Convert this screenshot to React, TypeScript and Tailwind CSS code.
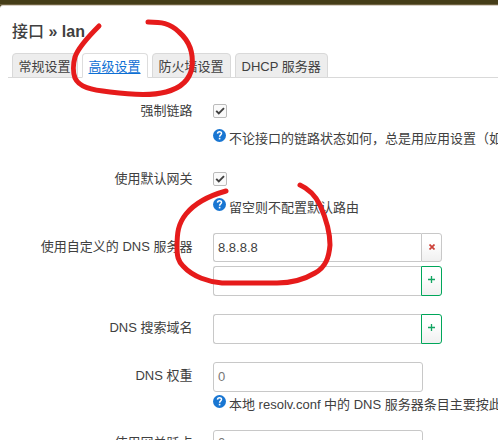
import type { ReactNode } from 'react';

function Tab({ children, active = false }: { children: ReactNode; active?: boolean }) {
  return (
    <div
      className={
        'h-[25px] whitespace-nowrap rounded-t-[4px] border pl-[5.5px] pr-[6.5px] text-[13px] leading-[25px] ' +
        (active
          ? 'border-[#ddd] border-b-white bg-white text-[#0d6fd4] underline underline-offset-[2px]'
          : 'border-[#d9d9d9] bg-[#ededed]')
      }
    >
      {children}
    </div>
  );
}

function Row({ label, height, labelPad, children }: { label: string; height: string; labelPad: string; children: ReactNode }) {
  return (
    <div className={'flex shrink-0 gap-5 ' + height}>
      <div className={'w-[193px] shrink-0 whitespace-nowrap pr-[0.5px] text-right ' + labelPad}>{label}</div>
      <div className="min-w-0 flex-1">{children}</div>
    </div>
  );
}

function Check() {
  return (
    <div className="mt-[2px] h-[14px] w-[14px] rounded-[2px] border border-[#bbb] bg-[#fafafa]">
      <svg viewBox="0 0 12 12" className="block h-3 w-3" fill="none" stroke="#404040" strokeWidth="1.9">
        <path d="M2.2 5.8 4.8 8.5 10 3.2" />
      </svg>
    </div>
  );
}

function Hint({ children, className }: { children: ReactNode; className: string }) {
  return (
    <div className={'flex gap-[3px] whitespace-nowrap ' + className}>
      <svg viewBox="0 0 13 13" className="h-[13px] w-[13px] shrink-0">
        <circle cx="6.5" cy="6.5" r="6.5" fill="#1976d2" />
        <path d="M4.5 4.6C4.6 2.1 8.6 2.2 8.5 4.5C8.4 5.9 6.6 5.9 6.6 7.7" fill="none" stroke="#fff" strokeWidth="1.5" />
        <rect x="5.8" y="8.8" width="1.6" height="1.6" fill="#fff" />
      </svg>
      <span className="pt-[1px]">{children}</span>
    </div>
  );
}

function Field({ value = '', action, height }: { value?: string; action: 'add' | 'remove'; height: string }) {
  return (
    <div className={'flex w-[229px] ' + height}>
      <div className="flex flex-1 items-center rounded-l-[3px] border border-r-0 border-[#c8c8c8] pl-[4px]">{value}</div>
      <div
        className={
          'flex w-[21px] items-center justify-center rounded-r-[3px] border bg-linear-to-b from-white from-30% to-[#f0f0f0] ' +
          (action === 'add' ? 'border-[#00a65a]' : 'border-[#c8c8c8]')
        }
      >
        {action === 'add' ? (
          <svg viewBox="0 0 7 7" className="mb-[3px] h-[7px] w-[7px]" stroke="#12a562" strokeWidth="1.3">
            <path d="M0 3.5H7M3.5 0V7" />
          </svg>
        ) : (
          <svg viewBox="0 0 6 6" className="mb-[1px] h-[6px] w-[6px]" stroke="#cc4038" strokeWidth="1.7">
            <path d="M.5 .5 5.5 5.5M5.5 .5 .5 5.5" />
          </svg>
        )}
      </div>
    </div>
  );
}

function NumberBox({ align }: { align: string }) {
  return (
    <div className={'flex h-[30px] w-[210px] rounded-[3px] border border-[#c8c8c8] pl-[4px] text-[#777] ' + align}>0</div>
  );
}

export default function App() {
  return (
    <div className="relative h-[440px] w-[498px] overflow-hidden bg-[#453d18] font-['Liberation_Sans','Noto_Sans_CJK_SC',sans-serif] text-[13px] leading-[18px] text-[#404040]">
      <div className="h-[4px] bg-[#453d18]" />
      <div className="h-[1px] bg-[#6c603e]" />
      <div className="h-[435px] rounded-tl-[3px] border-t border-[#d8d0c6] bg-white">
        <h1 className="h-[47px] pl-[12px] pt-[16px] text-[16px] font-bold leading-[20px]">
          <span className="font-medium">接口</span> » lan
        </h1>
        <div className="ml-[8px] flex h-[25px] gap-[4px] border-b border-[#d9d9d9] pl-[4px]">
          <Tab>常规设置</Tab>
          <Tab active>高级设置</Tab>
          <Tab>防火墙设置</Tab>
          <Tab>DHCP 服务器</Tab>
        </div>
        <div className="flex flex-col gap-[18px] pt-[24px]">
          <Row label="强制链路" height="h-[50px]" labelPad="pt-0">
            <Check />
            <Hint className="mt-[11px]">不论接口的链路状态如何，总是用应用设置（如</Hint>
          </Row>
          <Row label="使用默认网关" height="h-[45px]" labelPad="pt-0">
            <Check />
            <Hint className="mt-[12px]">留空则不配置默认路由</Hint>
          </Row>
          <Row label="使用自定义的 DNS 服务器" height="h-[63px]" labelPad="pt-[5px]">
            <div className="flex flex-col gap-[4px]">
              <Field value="8.8.8.8" action="remove" height="h-[29px]" />
              <Field action="add" height="h-[30px]" />
            </div>
          </Row>
          <Row label="DNS 搜索域名" height="h-[30px]" labelPad="pt-[5px]">
            <Field action="add" height="h-[30px]" />
          </Row>
          <Row label="DNS 权重" height="h-[50px]" labelPad="pt-[5px]">
            <NumberBox align="items-center" />
            <Hint className="mt-[3px]">本地 resolv.conf 中的 DNS 服务器条目主要按此</Hint>
          </Row>
          <Row label="使用网关跃点" height="h-[30px]" labelPad="pt-[4px]">
            <NumberBox align="items-start pt-[3px]" />
          </Row>
        </div>
      </div>
      <svg
        className="pointer-events-none absolute inset-0"
        width="498"
        height="440"
        fill="none"
        stroke="#e61b1b"
        strokeWidth="5"
        strokeLinecap="round"
        strokeLinejoin="round"
      >
        <path d="M99 26C88 37 78 48 75 57C73 64 73 73 75 78C79 87 91 90 110 92C133 95 155 95 166 92C181 88 190 80 192 67C194 50 187 39 179 32C170 23 161 22 148 22" />
        <path d="M226 191C208 196 195 203 186 214C178 224 177 233 177 247C177 256 178 261 183 266C193 277 209 282 222 283H277C292 283 305 279 315 273C326 267 329 257 330 245C330 229 324 214 320 205C315 195 309 189 300 185" />
      </svg>
    </div>
  );
}
